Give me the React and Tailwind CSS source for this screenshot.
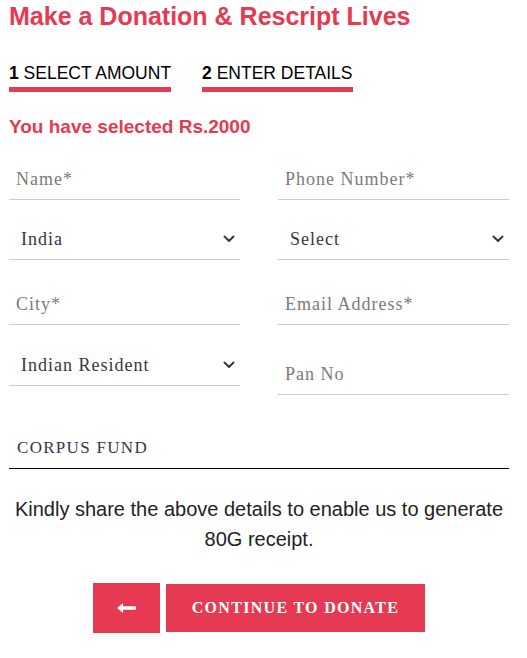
const serif = { fontFamily: '"Liberation Serif", "Times New Roman", serif' };

function Chevron() {
  return (
    <svg width="12" height="8" viewBox="0 0 12 8" className="shrink-0">
      <path d="M1.5 1.5 L6 6 L10.5 1.5" fill="none" stroke="#343a40" strokeWidth="2" strokeLinecap="round" strokeLinejoin="round" />
    </svg>
  );
}

function TextField({ label, className = "" }) {
  return (
    <div className={`flex h-[41px] items-center border-b border-[#cccccc] pl-[7px] ${className}`}>
      <span className="text-[18px] tracking-[1px] text-[#7b7b7b]" style={serif}>{label}</span>
    </div>
  );
}

function SelectField({ label, className = "" }) {
  return (
    <div className={`flex h-[41px] items-center justify-between border-b border-[#cccccc] pl-[12px] pr-[5px] ${className}`}>
      <span className="text-[18px] tracking-[1px] text-[#333842]" style={serif}>{label}</span>
      <Chevron />
    </div>
  );
}

export default function App() {
  return (
    <div className="min-h-[658px] w-[527px] bg-white pl-[9px] pr-[18px]" style={{ fontFamily: '"Liberation Sans", Arial, sans-serif' }}>
      <h1 className="pt-[1px] text-[25px] font-bold leading-[30px] text-[#e53a51]">Make a Donation &amp; Rescript Lives</h1>

      <div className="mt-[31px] flex gap-[31px]">
        <div className="border-b-[5px] border-[#e53a51] pb-[3px] text-[17.5px] leading-[22px] text-black">
          <span className="font-bold">1</span> SELECT AMOUNT
        </div>
        <div className="border-b-[5px] border-[#e53a51] pb-[3px] text-[17.5px] leading-[22px] text-black">
          <span className="font-bold">2</span> ENTER DETAILS
        </div>
      </div>

      <p className="mt-[23px] text-[19px] font-bold leading-[24px] text-[#e53a51]">You have selected Rs.2000</p>

      <div className="mt-[20px] grid grid-cols-2 gap-x-[38px]">
        <div className="flex flex-col">
          <TextField label="Name*" />
          <SelectField label="India" className="mt-[19px]" />
          <TextField label="City*" className="mt-[24px]" />
          <SelectField label="Indian Resident" className="mt-[20px]" />
        </div>
        <div className="flex flex-col">
          <TextField label="Phone Number*" />
          <SelectField label="Select" className="mt-[19px]" />
          <TextField label="Email Address*" className="mt-[24px]" />
          <TextField label="Pan No" className="mt-[29px]" />
        </div>
      </div>

      <div className="mt-[33px] flex h-[41px] items-center border-b border-black pl-[8px]">
        <span className="text-[17px] tracking-[1.3px] text-[#333842]" style={serif}>CORPUS FUND</span>
      </div>

      <p className="mt-[25px] text-center text-[20px] leading-[30px] text-[#222222]">
        Kindly share the above details to enable us to generate 80G receipt.
      </p>

      <div className="mt-[29px] flex justify-center gap-[6px] pb-[25px]">
        <button type="button" className="flex h-[50px] w-[67px] items-center justify-center bg-[#e53a51]">
          <svg width="19" height="10" viewBox="0 0 19 10">
            <path d="M0 5 L6 0 L6 3.2 L19 3.2 L19 6.8 L6 6.8 L6 10 Z" fill="white" />
          </svg>
        </button>
        <button type="button" className="mt-[1px] h-[48px] w-[259px] bg-[#e53a51] text-[16px] font-bold tracking-[1.3px] text-white" style={serif}>
          CONTINUE TO DONATE
        </button>
      </div>
    </div>
  );
}
